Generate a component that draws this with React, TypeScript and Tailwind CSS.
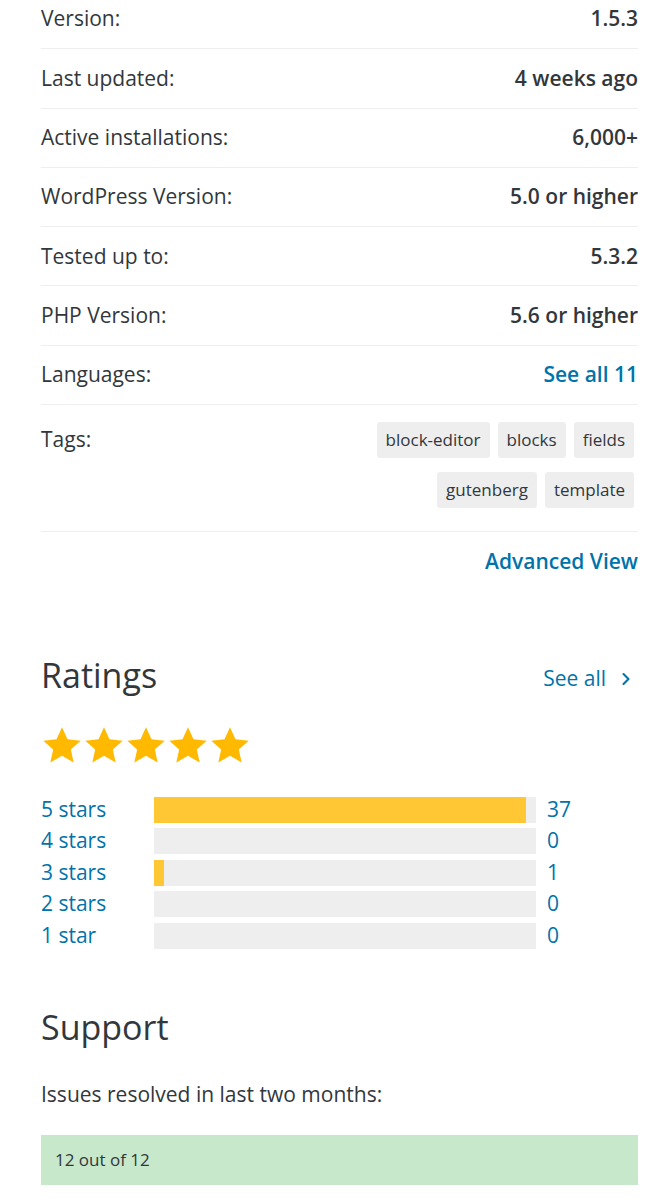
import { ChevronRight } from "lucide-react";

const meta = [
  { label: "Version:", value: "1.5.3" },
  { label: "Last updated:", value: "4 weeks ago" },
  { label: "Active installations:", value: "6,000+" },
  { label: "WordPress Version:", value: "5.0 or higher" },
  { label: "Tested up to:", value: "5.3.2" },
  { label: "PHP Version:", value: "5.6 or higher" },
];

const tags = ["block-editor", "blocks", "fields", "gutenberg", "template"];

const ratings = [
  { label: "5 stars", count: 37 },
  { label: "4 stars", count: 0 },
  { label: "3 stars", count: 1 },
  { label: "2 stars", count: 0 },
  { label: "1 star", count: 0 },
];

function Star() {
  return (
    <svg viewBox="0 0 24 24" className="w-[40px] h-[40px]" fill="#ffb900">
      <path d="M12 1.4l3.3 7.2 7.9.8-5.9 5.3 1.7 7.8L12 18.5l-7 4 1.7-7.8L.8 9.4l7.9-.8z" />
    </svg>
  );
}

export default function App() {
  const total = 38;

  return (
    <div
      className="w-[665px] min-h-[1200px] bg-white text-[#32373c] pl-[41px] pr-[27px] overflow-hidden"
      style={{ fontFamily: '"Open Sans", "Noto Sans", sans-serif' }}
    >
      {/* Plugin meta */}
      <ul className="mt-[-10px]">
        {meta.map((m) => (
          <li
            key={m.label}
            className="h-[59.3px] flex items-center justify-between border-b border-[#eeeeee] text-[21px]"
          >
            <span>{m.label}</span>
            <span className="font-semibold">{m.value}</span>
          </li>
        ))}
        <li className="h-[59.3px] flex items-center justify-between border-b border-[#eeeeee] text-[21px]">
          <span>Languages:</span>
          <span className="font-semibold text-[#0073aa]">See all 11</span>
        </li>
        <li className="flex justify-between border-b border-[#eeeeee] pt-[17px] pb-[23px]">
          <span className="text-[21px] leading-[30px] mt-[2px]">Tags:</span>
          <div className="flex flex-wrap justify-end gap-x-[8px] gap-y-[14px] w-[280px] mr-[4px]">
            {tags.map((t) => (
              <span
                key={t}
                className="h-[36px] flex items-center px-[9px] bg-[#eeeeee] rounded-[3px] text-[17px]"
              >
                {t}
              </span>
            ))}
          </div>
        </li>
      </ul>
      <div className="flex justify-end mt-[14px]">
        <span className="text-[21px] font-semibold text-[#0073aa]">Advanced View</span>
      </div>

      {/* Ratings */}
      <div className="flex items-center justify-between mt-[73px]">
        <h2 className="text-[34px] leading-[48px] font-normal">Ratings</h2>
        <span className="flex items-center gap-[10px] text-[21px] text-[#0073aa] mt-[9px]">
          See all
          <ChevronRight size={20} strokeWidth={2.5} className="mr-[2px]" />
        </span>
      </div>
      <div className="flex gap-[2px] mt-[26px] ml-[1px]">
        {[0, 1, 2, 3, 4].map((i) => (
          <Star key={i} />
        ))}
      </div>
      <div className="flex flex-col gap-[5.5px] mt-[32px]">
        {ratings.map((r) => (
          <div key={r.label} className="flex items-center h-[26px] text-[21px] text-[#0073aa]">
            <span className="w-[113px]">{r.label}</span>
            <div className="w-[382px] h-[26px] bg-[#eeeeee]">
              <div
                className="h-full bg-[#ffc733]"
                style={{ width: `${(r.count / total) * 100}%` }}
              />
            </div>
            <span className="ml-[11px]">{r.count}</span>
          </div>
        ))}
      </div>

      {/* Support */}
      <h2 className="text-[34px] leading-[48px] font-normal mt-[54px]">Support</h2>
      <p className="text-[21px] mt-[28px]">Issues resolved in last two months:</p>
      <div className="mt-[25px] h-[50px] flex items-center bg-[#c7e8ca] px-[14px] text-[17px]">
        12 out of 12
      </div>
    </div>
  );
}
